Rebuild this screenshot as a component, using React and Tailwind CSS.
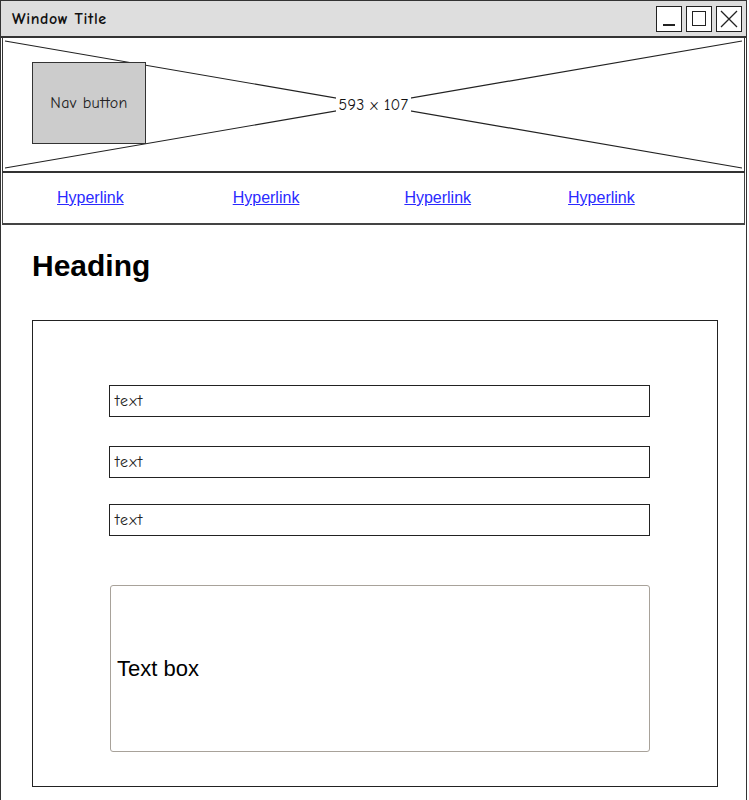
import React from "react";

const sketch = "font-['Comic_Sans_MS','Comic_Neue','Lato',sans-serif]";

function TextInput() {
    return (
        <div className={`h-[32px] border border-[#222] bg-white flex items-center px-[5px] text-[16px] tracking-[1px] text-[#222] ${sketch}`}>
            text
        </div>
    );
}

export default function App() {
    return (
        <div className="w-[747px] h-[800px] bg-white border border-[#333] border-b-0 flex flex-col font-['Liberation_Sans',Arial,sans-serif]">
            {/* Title bar */}
            <div className="shrink-0 h-[37px] bg-[#dedede] border-b-2 border-[#333] flex items-center justify-between pl-[11px] pr-[4px]">
                <span className={`text-[16px] font-bold tracking-[0.6px] text-[#111] ${sketch}`}>Window Title</span>
                <div className="flex gap-[4px]">
                    <div className="w-[26px] h-[26px] bg-white border border-[#222] flex items-end justify-center pb-[5px]">
                        <div className="w-[12px] h-[1.5px] bg-[#222]" />
                    </div>
                    <div className="w-[26px] h-[26px] bg-white border border-[#222] flex items-center justify-center">
                        <div className="w-[14px] h-[15px] border-[1.5px] border-[#222]" />
                    </div>
                    <div className="w-[26px] h-[26px] bg-white border border-[#222] flex items-center justify-center">
                        <svg width="20" height="20" viewBox="0 0 20 20" fill="none" stroke="#222" strokeWidth="1.3">
                            <path d="M2 2 L18 18 M18 2 L2 18" />
                        </svg>
                    </div>
                </div>
            </div>

            {/* Image placeholder with nav button */}
            <div className="shrink-0 relative h-[135px] ml-[1px] mr-[1px] border-x border-b-2 border-[#333]">
                <svg className="absolute inset-0 w-full h-full" viewBox="0 0 741 133" preserveAspectRatio="none">
                    <path d="M2 3 L739 130 M739 3 L2 130" stroke="#222" strokeWidth="1.2" fill="none" />
                </svg>
                <div className="absolute inset-0 flex items-center justify-center">
                    <span className={`bg-white px-[3px] text-[16px] tracking-[0.3px] text-[#111] ${sketch}`}>593 x 107</span>
                </div>
                <div className="relative pt-[24px] pl-[29px]">
                    <div className={`w-[114px] h-[82px] bg-[#cccccc] border border-[#333] flex items-center justify-center text-[16px] tracking-[0.4px] text-[#222] ${sketch}`}>
                        Nav button
                    </div>
                </div>
            </div>

            {/* Links bar */}
            <div className="shrink-0 h-[52px] mx-[1px] border-x border-b-2 border-[#444] flex items-center text-[16px]">
                <a href="#" className="ml-[54px] text-[#2a2aff] underline">Hyperlink</a>
                <a href="#" className="ml-[109px] text-[#2a2aff] underline">Hyperlink</a>
                <a href="#" className="ml-[105px] text-[#2a2aff] underline">Hyperlink</a>
                <a href="#" className="ml-[97px] text-[#2a2aff] underline">Hyperlink</a>
            </div>

            {/* Content */}
            <div className="shrink-0 px-[31px] pt-[23px]">
                <h1 className="text-[30px] font-bold text-black leading-[36px]">Heading</h1>
                <div className="mt-[36px] w-[686px] h-[467px] border border-[#222] pt-[64px] px-[76px]">
                    <div className="flex flex-col w-[541px]">
                        <TextInput />
                        <div className="mt-[29px]"><TextInput /></div>
                        <div className="mt-[26px]"><TextInput /></div>
                        <div className="mt-[49px] ml-[1px] h-[167px] border border-[#a8a29a] rounded-[3px] flex items-center px-[6px] text-[22px] text-black">
                            Text box
                        </div>
                    </div>
                </div>
            </div>
        </div>
    );
}
